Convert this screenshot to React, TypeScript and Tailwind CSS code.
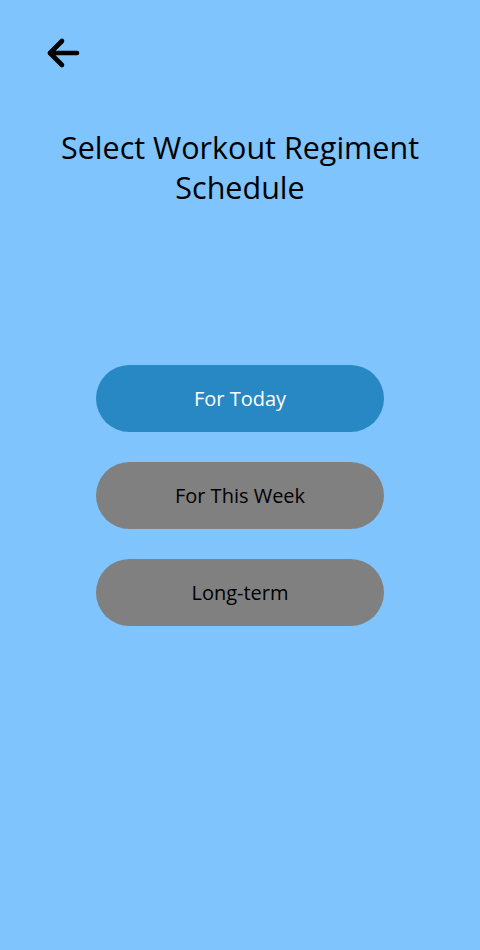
export default function App() {
  const options = [
    { label: 'For Today', active: true },
    { label: 'For This Week', active: false },
    { label: 'Long-term', active: false },
  ]

  return (
    <div className="w-[480px] h-[950px] bg-[#7fc4fd] flex flex-col font-['Open_Sans',sans-serif]">
      <div className="pt-[37px] pl-[45px] h-[127px]">
        <button className="w-[36px] h-[32px] flex items-center justify-center">
          <svg width="36" height="32" viewBox="0 0 36 32" fill="none" stroke="#000" strokeWidth="4.6" strokeLinecap="round" strokeLinejoin="round">
            <path d="M5 16H32" />
            <path d="M17 4L5 16L17 28" />
          </svg>
        </button>
      </div>

      <h1 className="text-center text-[30.5px] leading-[40px] text-black px-4">
        Select Workout Regiment
        <br />
        Schedule
      </h1>

      <div className="mt-[158px] flex flex-col items-center gap-[30px]">
        {options.map((opt, idx) => (
          <button
            key={idx}
            className={
              opt.active
                ? 'w-[288px] h-[67px] rounded-full bg-[#2888c4] text-white text-[20px]'
                : 'w-[288px] h-[67px] rounded-full bg-[#808080] text-black text-[20px]'
            }
          >
            {opt.label}
          </button>
        ))}
      </div>
    </div>
  )
}
